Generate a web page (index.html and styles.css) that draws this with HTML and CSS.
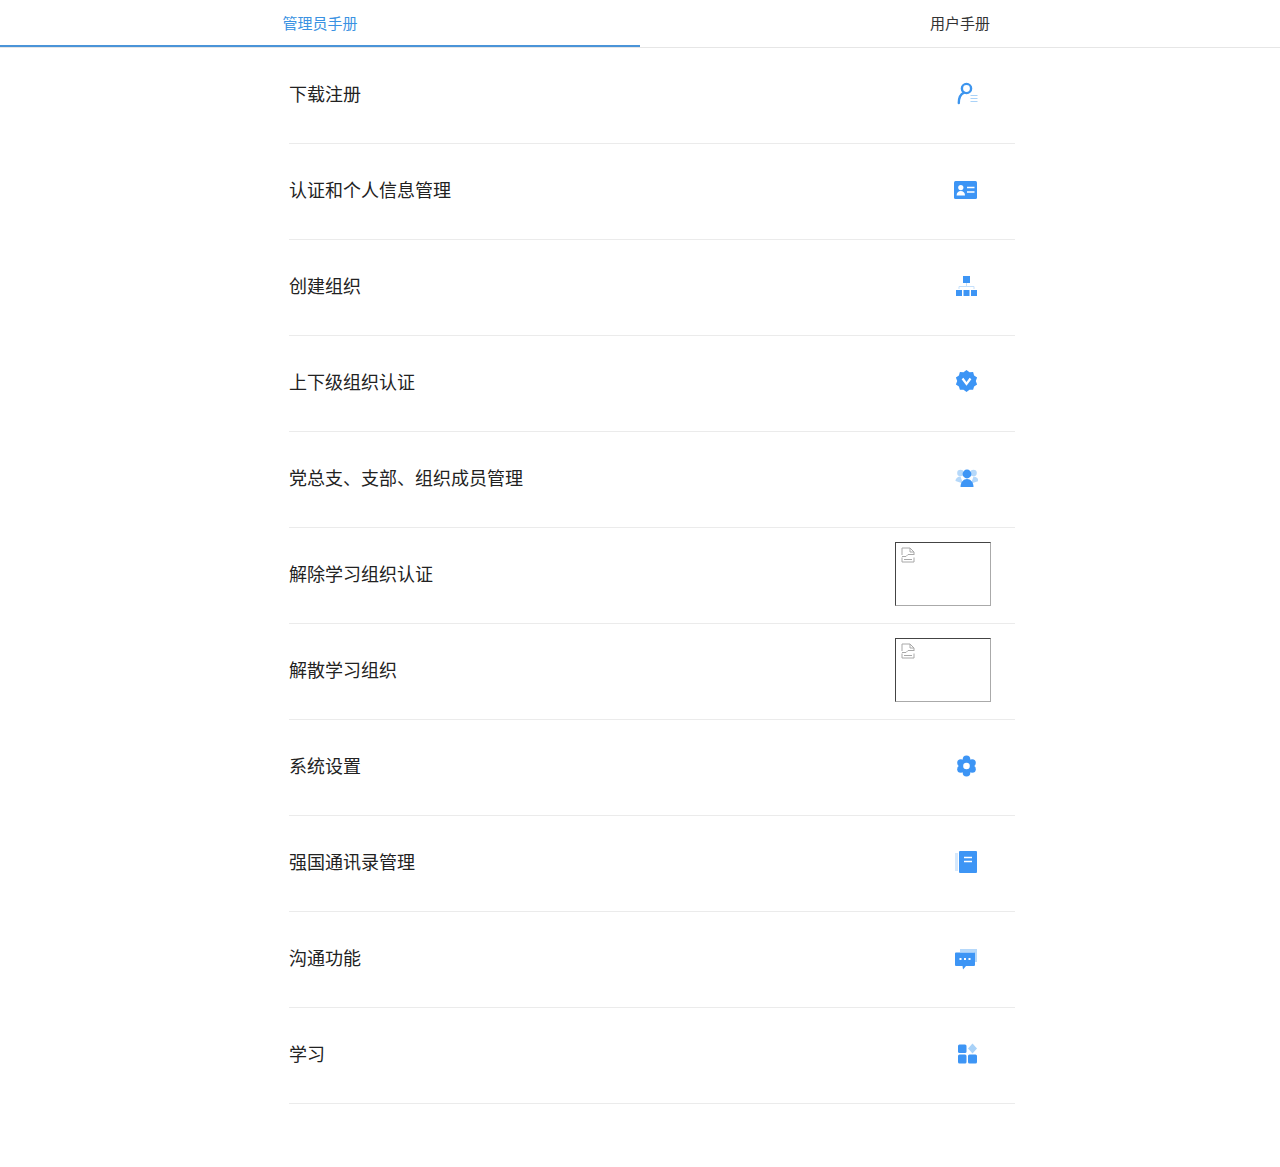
FILE: index.html
```html
<!DOCTYPE html>
<html lang="zh-CN">
<head>
<meta charset="utf-8">
<title>手册</title>
<link rel="stylesheet" href="styles.css">
</head>
<body>
<nav class="tabs">
  <a class="tab tab-active">管理员手册</a>
  <a class="tab">用户手册</a>
</nav>
<ul class="list">
  <li class="row"><span class="label">下载注册</span>
    <svg class="icon" viewBox="0 0 24 24"><circle cx="12.500" cy="6.500" r="4.600" fill="none" stroke="#3d95ee" stroke-width="2.400"/><path d="M4.800 21c0-5.500 2.400-9 5.200-10.300" fill="none" stroke="#3d95ee" stroke-width="2.400" stroke-linecap="round"/><path d="M16.500 13.500h7M16.500 16.500h7M16.500 19.500h7" stroke="#a9d2f8" stroke-width="1"/></svg></li>
  <li class="row"><span class="label">认证和个人信息管理</span>
    <svg class="icon" viewBox="0 0 24 24"><rect x="0" y="3" width="23" height="18" rx="1.500" fill="#3d95f5"/><circle cx="6.800" cy="9.600" r="2.600" fill="#fff"/><path d="M2.600 17.500c0-3 1.800-4.600 4.200-4.600s4.200 1.600 4.200 4.600z" fill="#fff"/><path d="M13 9.500h7.500M13 14h7.500" stroke="#fff" stroke-width="1.700"/></svg></li>
  <li class="row"><span class="label">创建组织</span>
    <svg class="icon" viewBox="0 0 24 24"><rect x="9" y="2" width="7" height="7" fill="#3d95f5"/><path d="M12.500 9v3M5 15v-2.500h15V15" fill="none" stroke="#c5e0fb" stroke-width="1"/><rect x="2" y="16" width="6" height="6" fill="#3d95f5"/><rect x="9.500" y="16" width="6" height="6" fill="#3d95f5"/><rect x="17" y="16" width="6" height="6" fill="#3d95f5"/></svg></li>
  <li class="row"><span class="label">上下级组织认证</span>
    <svg class="icon" viewBox="0 0 24 24"><path d="M12.500 2l3 2.200 3.600-.2 1 3.500 3 2-1.300 3.500 1.300 3.500-3 2-1 3.300-3.600-.1-3 2.300-3-2.300-3.600.1-1-3.300-3-2 1.300-3.500-1.300-3.500 3-2 1-3.500 3.600.2z" transform="translate(0 -2)" fill="#3d95f5"/><path d="M8.500 8.500l4 5.500 4-5.500" fill="none" stroke="#fff" stroke-width="2.200"/></svg></li>
  <li class="row"><span class="label">党总支、支部、组织成员管理</span>
    <svg class="icon" viewBox="0 0 24 24"><circle cx="6.500" cy="7" r="3.300" fill="#b5d8fa"/><circle cx="19.500" cy="7" r="3.300" fill="#b5d8fa"/><path d="M1.500 15c0-2.500 2.500-4.500 5-4.500l2.500 7zM24.500 15c0-2.500-2.500-4.500-5-4.500l-2.500 7z" fill="#b5d8fa"/><circle cx="13" cy="8" r="4.400" fill="#3d95f5"/><path d="M6.500 21c0-5 3-8 6.500-8s6.500 3 6.500 8z" fill="#3d95f5"/></svg></li>
  <li class="row"><span class="label">解除学习组织认证</span>
    <span class="broken"><svg class="broken-icon" viewBox="0 0 14 16"><path d="M1 8V1h8l4 4v3M1 10.500v4.500h12v-4.500M1 9.500h4l2-2h6M9 1v4h4M3 12.500h8" fill="none" stroke="#a8a8a8" stroke-width="1"/></svg></span></li>
  <li class="row"><span class="label">解散学习组织</span>
    <span class="broken"><svg class="broken-icon" viewBox="0 0 14 16"><path d="M1 8V1h8l4 4v3M1 10.500v4.500h12v-4.500M1 9.500h4l2-2h6M9 1v4h4M3 12.500h8" fill="none" stroke="#a8a8a8" stroke-width="1"/></svg></span></li>
  <li class="row"><span class="label">系统设置</span>
    <svg class="icon" viewBox="0 0 24 24"><g fill="#3d95f5"><circle cx="12.500" cy="12" r="7"/><circle cx="6.800" cy="8.800" r="3.600"/><circle cx="18.200" cy="8.800" r="3.600"/><circle cx="6.800" cy="15.200" r="3.600"/><circle cx="18.200" cy="15.200" r="3.600"/><circle cx="12.500" cy="5.200" r="3.800"/><circle cx="12.500" cy="18.800" r="3.800"/></g><circle cx="12.500" cy="12" r="3.300" fill="#fff"/></svg></li>
  <li class="row"><span class="label">强国通讯录管理</span>
    <svg class="icon" viewBox="0 0 24 24"><rect x="1" y="3" width="3" height="18" fill="#d5e8fc"/><rect x="5" y="1" width="18" height="22" rx="1" fill="#3d95f5"/><path d="M10 7.500h8M10 11.500h8" stroke="#fff" stroke-width="1.500"/></svg></li>
  <li class="row"><span class="label">沟通功能</span>
    <svg class="icon" viewBox="0 0 24 24"><path d="M6 3h17v13h-3V6H6z" fill="#b5d8fa"/><path d="M2 6.500h18a1 1 0 0 1 1 1V19a1 1 0 0 1-1 1h-8l-3 3.500-.5-3.500H2a1 1 0 0 1-1-1V7.500a1 1 0 0 1 1-1z" fill="#3d95f5"/><path d="M5.500 13h2M10 13h2M14.500 13h2" stroke="#fff" stroke-width="2"/></svg></li>
  <li class="row"><span class="label">学习</span>
    <svg class="icon" viewBox="0 0 24 24"><rect x="4" y="2.500" width="8.500" height="8.500" rx="1.500" fill="#3d95f5"/><path d="M18.500 1.500l4.500 5-4.500 5-4.500-5z" fill="#a9d2f8"/><rect x="4" y="12.500" width="8.500" height="9" rx="1.500" fill="#3d95f5"/><rect x="14" y="12.500" width="9" height="9" rx="1.500" fill="#3d95f5"/></svg></li>
</ul>
</body>
</html>
```

FILE: styles.css
```css
* {
  box-sizing: border-box;
}

body {
  margin: 0;
  background: #fff;
  color: #222;
  font-family: "Noto Sans CJK SC", "Liberation Sans", sans-serif;
}

.tabs {
  display: flex;
  height: 48px;
  border-bottom: 1px solid #e6e6e6;
}

.tab {
  flex: 1;
  height: 47px;
  line-height: 46px;
  text-align: center;
  font-size: 15px;
  color: #333;
}

.tab-active {
  color: #3a92e2;
  border-bottom: 2px solid #4a94d8;
}

.list {
  list-style: none;
  margin: 0 265px 0 289px;
  padding: 0;
}

.row {
  display: flex;
  align-items: center;
  justify-content: space-between;
  height: 96px;
  padding: 0 24px 4px 0;
  border-bottom: 1px solid #ebebeb;
}

.label {
  margin-bottom: 2px;
  font-size: 18px;
}

.icon {
  width: 24px;
  height: 24px;
  margin-right: 13px;
}

.broken {
  display: block;
  width: 96px;
  height: 64px;
  padding: 4px 5px;
  border: 1px solid;
  border-color: #444 #aaa #aaa #444;
}

.broken-icon {
  display: block;
  width: 14px;
  height: 16px;
}
```
